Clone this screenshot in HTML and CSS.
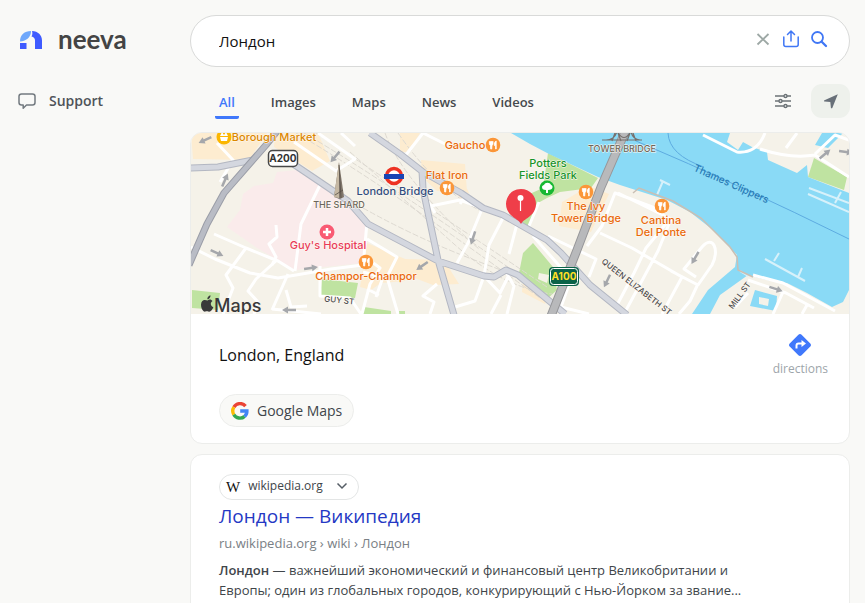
FILE: index.html
```html
<!DOCTYPE html>
<html lang="ru">
<head>
<meta charset="utf-8">
<meta name="viewport" content="width=device-width, initial-scale=1">
<title>Лондон</title>
<link rel="stylesheet" href="styles.css">
</head>
<body>
<div class="page">
  <aside class="sidebar">
    <a class="brand" href="#">
      <svg width="24" height="20" viewBox="0 0 24 20" aria-hidden="true">
        <path d="M2 11.500C2 5 6.500 1 13 1c.3 4-2.500 8-6.500 9.500-1.500.6-3 1-4.500 1z" fill="#6fa8fb"/>
        <path d="M2 13h6.500v6H2zM14 1C20 1.200 24 5 24 10.500V19h-7v-8.500c0-2-1.200-3.500-3.500-4C14.500 4.800 14.600 3 14 1z" fill="#3f5bff"/>
      </svg>
      <span>neeva</span>
    </a>
    <a class="support" href="#">
      <svg width="18" height="18" viewBox="0 0 18 18" fill="none" stroke="#737a80" stroke-width="1.500" stroke-linejoin="round" aria-hidden="true"><path d="M3.500 2h11C16 2 17 3 17 4.300v6.200c0 1.500-1 2.500-2.500 2.500H8.500L5.200 16.200V13H3.500C2 13 1 12 1 10.500V4.300C1 3 2 2 3.500 2z"/></svg>
      <span>Support</span>
    </a>
  </aside>

  <main class="content">
    <form class="search" role="search">
      <input type="text" value="Лондон" aria-label="Search">
      <button type="reset" aria-label="Clear"><svg width="20" height="20" viewBox="0 0 20 20" fill="none" stroke="#9da8a5" stroke-width="1.800"><path d="M4.500 5l11 10.500M15.500 5l-11 10.500"/></svg></button>
      <button type="button" aria-label="Share"><svg width="20" height="20" viewBox="0 0 20 20" fill="none" stroke="#4077f5" stroke-width="1.500" stroke-linecap="round" stroke-linejoin="round"><path d="M2.800 8v7.500c0 1.200.8 2 2 2h10.400c1.200 0 2-.8 2-2V8M10 12V2.500M6.500 5.500L10 2l3.500 3.500"/></svg></button>
      <button type="submit" aria-label="Find"><svg width="20" height="20" viewBox="0 0 20 20" fill="none" stroke="#4077f5" stroke-width="1.800" stroke-linecap="round"><circle cx="8.500" cy="8.500" r="5.500"/><path d="M12.700 12.700l4.300 4.300" stroke-width="2.300"/></svg></button>
    </form>

    <div class="toolbar">
      <nav class="tabs">
        <a class="tab active" href="#">All</a>
        <a class="tab" href="#">Images</a>
        <a class="tab" href="#">Maps</a>
        <a class="tab" href="#">News</a>
        <a class="tab" href="#">Videos</a>
      </nav>
      <button class="tool" type="button" aria-label="Filters"><svg width="18" height="16" viewBox="0 0 18 16" fill="none" stroke="#6c7377" stroke-width="1.400"><path d="M1 3h9M13 3h4M1 8h4M8 8h9M1 13h9M13 13h4"/><circle cx="11.500" cy="3" r="1.500"/><circle cx="6.500" cy="8" r="1.500"/><circle cx="11.500" cy="13" r="1.500"/></svg></button>
      <button class="tool filled" type="button" aria-label="Location"><svg width="16" height="16" viewBox="0 0 16 16" fill="#687079"><path d="M14.800 1.200L1.500 7.200c-.8.400-.6 1.300.2 1.400l5.600.4.600 5.700c.1.800 1 .9 1.400.2z"/></svg></button>
    </div>

    <section class="card">
      <svg class="map" viewBox="191 133 658 181" preserveAspectRatio="xMidYMid slice" role="img" aria-label="Map of London">
        <defs>
          <g id="fork"><circle r="7.300" fill="#fb9638"/><path d="M-3.600-3.800v2.600c0 1 .6 1.300 1 1.400L-2.300 4h1L-1 .2c.5-.1 1-.5 1-1.400v-2.600M-1.800-3.800v3M3.200 4V-4C1.600-3.500 1.200-1.500 1.400.6h1.200V4z" fill="#fff" stroke="#fff" stroke-width=".8"/></g>
          <g id="arrow"><path d="M-7 0H2" fill="none" stroke="#a5a7ab" stroke-width="2.500"/><path d="M1-3.500L7 0 1 3.500z" fill="#a5a7ab"/></g>
        </defs>
        <path class="land" d="M191 133h658v181H191z"/>
        <g class="district">
          <path d="M191 133h76l-18 27-56-1z"/>
          <path d="M275 133h43l12 28-18 10-38-24z"/>
          <path d="M367 243l43 18-5 20-24 2-10 7-11-3z"/>
          <path d="M421 160l44 4 2 28-30-1-15-14zM448 185l13-9 8 17-7 7zM400 133h20l-12 19h-8zM562 202l27-16 20 8-18 38-32-6zM404 259l40 1 15 24-26 1-29-11zM524 270l27 17-6 17-23-12z"/>
        </g>
        <path d="M297 170l23 15 27 15 20 24-4 39-68 7-38-22-30-21 13-17 3-16 11-8 19-3 4-11z" fill="#faebeb"/>
        <g fill="#bfe3a1">
          <path d="M548 153l50 25-7 10-31 4-13 6-9 5-11 27-9-10 7-24 18-8zM533 243l20 24 4 23-10 9-28-26 4-20zM192 290l28 3-2 17-26-2zM322 279l36 4-3 15-35-2zM364 307l27 4v3h-28zM399 311h6v3h-6z"/>
          <path d="M814 158l33 19-3 13-36-13z"/>
        </g>
        <g fill="#8adaf6">
          <path d="M511 133h219l-3 9 11 8 5-8 9 5 15 5 1 8 29 13 10-8 1 12 41 16v97l-6 12-11 5-25-14-20-10-20-3-19-5-28 20-10 19h-18l16-24 27-23 2-12-24-25-23-18-23-12-47-15-22-8-49-23-19-10z"/>
          <path d="M815 145l7-12h21l-15 15zM755 290l22 6-1 15-26-5z"/>
        </g>
        <path d="M759 297l10 2-1 7-9-2z" fill="#f5f2e9"/>
        <path d="M539 273l10 2-2 8-9-4z" fill="#f5f2e9"/>
        <g class="rail">
          <path d="M296 133Q385 185 540 298M304 133Q389 183 542 291M316 133Q400 188 547 287M350 152Q405 200 454 244T552 294M385 133Q402 180 480 250M363 208Q420 240 485 264T545 300M398 133Q436 188 479 210"/>
        </g>
        <g class="ferry"><path d="M636 141Q740 185 849 239M668 133q1 22 36 34"/></g>
        <g class="street">
          <path d="M191 247l24 12 35 14 28 5 18-3 35-6 32-4M214 234l32 14 32 13 16 10M320 185l-19 39-6 47M276 225l1 12-8 7 7 13-4 8M246 248l-20 27 7 13-10 26M277 260l-21 19-8 12 10 11-4 12M288 274l-16 36M286 290l5 17 16-1M272 309l49 5M320 266v30l30 2 11 16M367 222l-3 34 16 12-10 16-8 30M367 239l30 18-10 20 11 37M363 272l20 5-7 20M367 289l12 6M217 143l16 17-13 22M318 133l37 26-19 12-42-29M341 133l14 13"/>
          <path d="M405 156l18-23 24 12M431 206l29-6 30 11M482 209l-14 34-11 20M504 216l-15 29-5 31-9 25-20 6M517 224l-8 30M539 202l-10 24M484 276l16 17 8-16M505 270l9 16-7 28M501 295l-10 19M427 200l8 13M467 193l-7 11M437 284l-14 12 11 6-4 12"/>
          <path d="M533 236l38 43-10 28 28 7M548 236l48 23-7 18M587 246l15-20 13-33 40 15M618 193l53 26-13 32-34 63M600 233l32 15 50 29-20 37M669 220l-23 28-12 25-18 34M696 277l-12-8 18-22c11-13 18 3 10 18l-14 20-27-14M697 286l-7 15-11 13M748 280l38 13 28 15M753 275l30 8 52 28M735 307l13-14M783 292l-10 22M807 305l-5 9M765 133q-8 21-28 19l-34-17M760 149q30 10 55 6l34 22M815 154l20-19 14 5M797 133l-11 15"/>
        </g>
        <g class="pier"><path d="M657 195l6-14m-3-1l10 5M765 259l40 22M774 261l5-8M798 277l4-9M809 188l40 15M808 194l41 18M835 203l6-11M748 276l-8-5"/></g>
        <path d="M633 193l6-5 34 13 28 17 29 29 7 10 1 13 15 7" fill="none" stroke="#c9bfb4" stroke-width="1.500"/>
        <g class="road-edge"><path d="M190 168l28-1 35-7M277 153l43 29 28 19 20 23 38 20 32 17 46 15 10 1 12-7 12 5 47 39M370 133l30 21 23 18 38 21 22 15 20 7 44 25 14 13 29 32 37 30M422 171l1 18 15 71 16 55"/></g>
        <g class="road"><path d="M190 168l28-1 35-7M277 153l43 29 28 19 20 23 38 20 32 17 46 15 10 1 12-7 12 5 47 39M370 133l30 21 23 18 38 21 22 15 20 7 44 25 14 13 29 32 37 30M422 171l1 18 15 71 16 55"/></g>
        <path class="major-edge" d="M278 130l-12 15-42 48-17 31-18 41"/>
        <path class="major" d="M278 130l-12 15-42 48-17 31-18 41"/>
        <path class="bridge-edge" d="M625 132l-24 55-24 63-26 66"/>
        <path class="bridge" d="M625 132l-24 55-24 63-26 66"/>
        <use href="#arrow" transform="translate(205 140) rotate(155)"/>
        <use href="#arrow" transform="translate(225 180) rotate(-66)"/>
        <use href="#arrow" transform="translate(217 253) rotate(25)"/>
        <use href="#arrow" transform="translate(311 268) rotate(-8)"/>
        <use href="#arrow" transform="translate(289 310) rotate(180)"/>
        <use href="#arrow" transform="translate(335 157) rotate(130)"/>
        <use href="#arrow" transform="translate(422 266) rotate(145)"/>
        <use href="#arrow" transform="translate(473 238) rotate(108)"/>
        <use href="#arrow" transform="translate(607 281) rotate(116)"/>
        <use href="#arrow" transform="translate(695 258) rotate(120)"/>
        <use href="#arrow" transform="translate(776 289) rotate(18)"/>
        <use href="#arrow" transform="translate(825 154) rotate(-40)"/>
        <use href="#arrow" transform="translate(846 152) rotate(8)"/>

        <g fill="none" stroke="#77706d" stroke-width="1.200"><path d="M602 140h40M606 140q9 0 11-9q7 13 14 0q1 8 9 9M615 133l-3 8M618 133l3 8M630 133l-3 8M633 133l3 8"/></g>
        <path d="M339 162l5 35-4 2-6-2z" fill="#80766b"/><path d="M339 162v36l-5-1z" fill="#c5b8a3"/><path d="M339 165l2 33M335 195l8-5" stroke="#574f47" stroke-width=".8"/>

        <rect x="268.500" y="150.500" width="29" height="16" rx="4" fill="#fff" stroke="#474747" stroke-width="1.500"/>
        <text class="shield" x="283" y="162">A200</text>
        <rect x="549" y="267" width="30" height="19" rx="4" fill="#0b6349"/><rect x="550.500" y="268.500" width="27" height="16" rx="3" fill="none" stroke="#fff"/>
        <text class="shield yellow" x="564" y="280">A100</text>

        <circle cx="394" cy="176" r="7.500" fill="#fff" stroke="#ed3224" stroke-width="3.500"/><path d="M384 174h20v5h-20z" fill="#1844b4"/>
        <circle cx="224" cy="137" r="7.500" fill="#fbb600"/><path d="M220 137h8l-1 4h-6zM220 136l2-4 2 3 2-3 2 4" fill="#fff"/>
        <circle cx="327" cy="232" r="7.500" fill="#f95a73"/><path d="M327 228v8M323 232h8" stroke="#fff" stroke-width="2.500"/>
        <circle cx="547" cy="188" r="7.500" fill="#17b832"/><path d="M546 193v-3c-3 0-4-1-4-3 0-1 1-2 2-2 1-3 6-3 7 0 2 0 3 5-3 5v3z" fill="#fff"/>
        <use href="#fork" x="493" y="145"/><use href="#fork" x="447" y="188"/><use href="#fork" x="586" y="192"/><use href="#fork" x="662" y="206"/><use href="#fork" x="366" y="262"/>

        <g class="label food">
          <text x="465" y="149">Gaucho</text>
          <text x="447" y="179">Flat Iron</text>
          <text x="586" y="210">The Ivy</text><text x="586" y="222">Tower Bridge</text>
          <text x="661" y="224">Cantina</text><text x="661" y="236">Del Ponte</text>
          <text x="366" y="280">Champor-Champor</text>
        </g>
        <g class="label">
          <text class="market" x="274" y="141">Borough Market</text>
          <text class="station" x="395" y="195">London Bridge</text>
          <text class="hospital" x="328" y="249">Guy's Hospital</text>
          <text class="park" x="548" y="167">Potters</text><text class="park" x="548" y="179">Fields Park</text>
          <text class="landmark" x="339" y="208">THE SHARD</text>
          <text class="landmark" x="622" y="152">TOWER BRIDGE</text>
        </g>
        <g class="label road-name">
          <text transform="translate(339 303) rotate(6)">GUY ST</text>
          <text transform="translate(635 289) rotate(38)">QUEEN ELIZABETH ST</text>
          <text transform="translate(742 297) rotate(-54)">MILL ST</text>
        </g>
        <text class="river" transform="translate(730 187) rotate(24)">Thames Clippers</text>
        <path d="M521 224c-2-4-6-5-9-8-3-2-6-7-6-12 0-8 6-15 15-15s15 7 15 15c0 5-3 10-6 12-3 3-7 4-9 8z" fill="#ef3e49"/><circle cx="520.500" cy="198" r="3" fill="#fff"/><path d="M520.500 200v11" stroke="#fff" stroke-width="1.200"/>
        <path d="M207.500 300.500c2-2 4-.9 5 .4-2.500 1.500-2.200 5 .9 6.200-1 3-3 5.400-5 4.500-1.200-.5-1.700-.5-3 0-3.500 1.200-7-9.600-1.500-11.500 1.400-.5 2.700.4 3.600.4zM207.300 299.300c0-2 1.300-3.600 3.200-4 .2 2-1.300 4-3.200 4z" fill="#39393a"/>
        <text class="maps" x="214" y="312">Maps</text>
      </svg>
      <div class="place">
        <div>
          <h2>London, England</h2>
          <a class="google" href="#">
            <svg width="18" height="18" viewBox="0 0 18 18" fill="none" stroke-width="3.400" aria-hidden="true"><path d="M14.500 4.100A7.100 7.100 0 0 0 2.900 5.200" stroke="#ea4335"/><path d="M2.900 5.200a7.100 7.100 0 0 0-.1 7.400" stroke="#fbbc05"/><path d="M2.800 12.600a7.100 7.100 0 0 0 10.800 1.800" stroke="#34a853"/><path d="M13.600 14.400A7 7 0 0 0 15.900 9H9.200" stroke="#4285f4"/></svg>
            <span>Google Maps</span>
          </a>
        </div>
        <a class="directions" href="#">
          <svg width="24" height="24" viewBox="0 0 24 24" aria-hidden="true"><path d="M10.400 1.700L1.700 10.400c-.9.900-.9 2.300 0 3.200l8.700 8.700c.9.900 2.300.9 3.200 0l8.700-8.700c.9-.9.900-2.300 0-3.200l-8.700-8.700c-.9-.9-2.300-.9-3.200 0z" fill="#4078fb"/><path d="M8.500 15.500v-3c0-1.200.8-2 2-2H15" fill="none" stroke="#fff" stroke-width="2"/><path d="M13.500 7l4.500 3.500-4.500 3.500z" fill="#fff"/></svg>
          <span>directions</span>
        </a>
      </div>
    </section>

    <article class="card result">
      <button class="site" type="button">
        <span class="wiki">W</span>
        <span>wikipedia.org</span>
        <svg width="12" height="12" viewBox="0 0 12 12" fill="none" stroke="#555d65" stroke-width="1.500" aria-hidden="true"><path d="M1.500 3.500L6 8l4.500-4.500"/></svg>
      </button>
      <h3><a href="#">Лондон — Википедия</a></h3>
      <p class="url">ru.wikipedia.org › wiki › Лондон</p>
      <p class="snippet"><b>Лондон</b> — важнейший экономический и финансовый центр Великобритании и Европы; один из глобальных городов, конкурирующий с Нью-Йорком за звание...</p>
    </article>
  </main>
</div>
</body>
</html>
```
FILE: styles.css
```css
* { box-sizing: border-box; }
body {
  margin: 0;
  background: #f9f9f7;
  color: #40454a;
  font: 14px/20px "Open Sans", "Noto Sans", sans-serif;
}
a { color: inherit; text-decoration: none; }
button { border: 0; padding: 0; background: none; font: inherit; color: inherit; cursor: pointer; }
svg { display: block; flex: none; }
h2, h3, p { margin: 0; font-weight: 400; }

.page {
  display: grid;
  grid-template-columns: 190px minmax(0, 1fr);
  padding-right: 15px;
}
.sidebar { padding: 24px 18px; }
.brand { display: flex; align-items: center; gap: 16px; height: 32px; color: #444; font: 700 26px/32px Lato, sans-serif; }
.brand span { padding-bottom: 2px; }
.support { display: flex; align-items: center; gap: 13px; margin-top: 35px; font-size: 14px; font-weight: 600; color: #4f5459; }

.content { padding-top: 15px; }
.search {
  display: flex;
  align-items: center;
  gap: 8px;
  height: 52px;
  padding: 0 20px 4px 28px;
  border: 1px solid #d9dad9;
  border-radius: 26px;
  background: #fff;
}
.search input {
  flex: 1;
  min-width: 0;
  height: 40px;
  padding: 4px 0 0;
  border: 0;
  outline: 0;
  background: none;
  color: #111;
  font: 15px/20px "Open Sans", "Noto Sans", sans-serif;
}

.toolbar { display: flex; align-items: center; height: 65px; padding-top: 2px; gap: 9px; }
.tabs { display: flex; gap: 28px; flex: 1; padding-left: 25px; }
.tab { padding: 9px 4px 4px; border-bottom: 3px solid transparent; border-radius: 2px; font-size: 13px; font-weight: 600; color: #45494d; }
.tab.active { border-color: #4078fb; color: #4078fb; }
.tool { display: grid; place-items: center; width: 39px; height: 34px; border-radius: 11px; }
.tool.filled { background: #eef1ec; }

.card {
  overflow: hidden;
  margin-bottom: 10px;
  border: 1px solid #ecedeb;
  border-radius: 12px;
  background: #fff;
}
.map { width: 100%; height: 181px; }
.place { display: flex; justify-content: space-between; padding: 19px 21px 16px 28px; }
.place h2 { margin-top: 10px; color: #111; font-size: 16px; line-height: 24px; }
.google {
  display: inline-flex;
  align-items: center;
  gap: 8px;
  height: 33px;
  margin-top: 27px;
  padding: 0 11px;
  border: 1px solid #ecedeb;
  border-radius: 17px;
  background: #f9f9f7;
}
.directions { display: flex; flex-direction: column; align-items: center; gap: 2px; color: #9da5aa; font-size: 12px; }

.result { padding: 19px 28px 28px; }
.site {
  display: flex;
  align-items: center;
  gap: 8px;
  height: 26px;
  padding: 0 10px 2px 6px;
  border: 1px solid #e3e5e5;
  border-radius: 13px;
  font-size: 12px;
}
.site svg { margin-left: 5px; }
.wiki { padding-top: 2px; color: #111; font: 15px/20px "Liberation Serif", serif; }
.result h3 { margin-top: 2px; color: #2438c4; font-size: 19px; line-height: 28px; }
.url { margin-top: 3px; color: #7a8085; font-size: 13px; }
.snippet { margin-top: 7px; max-width: 540px; font-size: 13px; }
.snippet b { font-weight: 600; }

.map text { font-family: Inter, sans-serif; text-anchor: middle; }
.land { fill: #f5f2e9; }
.district { fill: #fdecd0; }
.rail, .ferry, .street, .pier, .road, .road-edge, .major, .major-edge, .bridge, .bridge-edge { fill: none; stroke-linejoin: round; }
.rail { stroke: #ddd9d1; stroke-width: 1; stroke-dasharray: 6 2; }
.ferry { stroke: #5dabe0; stroke-width: 1; }
.street { stroke: #fff; stroke-width: 3; }
.pier { stroke: #d7f1fa; stroke-width: 2; }
.road-edge { stroke: #b3b7c2; stroke-width: 7; }
.road { stroke: #d4d7df; stroke-width: 5; }
.major-edge { stroke: #9a9da7; stroke-width: 7; }
.major { stroke: #b9bcc5; stroke-width: 5; }
.bridge-edge { stroke: #969699; stroke-width: 9; }
.bridge { stroke: #b8b9bb; stroke-width: 7; }
.label text { font-size: 11px; font-weight: 500; paint-order: stroke; stroke: #fffaf3; stroke-width: 1px; stroke-linejoin: round; }
.map .food text { fill: #e9690c; }
.map .market { fill: #db8700; }
.map .station { fill: #314d80; }
.map .hospital { fill: #e83b58; }
.map .park { fill: #16942a; }
.map .label .landmark { fill: #6b665b; font-size: 9px; }
.map .road-name text { fill: #4c4c4c; font-size: 8px; }
.map .river { fill: #287bb5; font-size: 10px; font-weight: 500; }
.map .shield { fill: #333; font-size: 10px; font-weight: 700; }
.map .yellow { fill: #ffdf24; }
.map .maps { fill: #39393a; font-size: 18px; font-weight: 500; text-anchor: start; }
```
